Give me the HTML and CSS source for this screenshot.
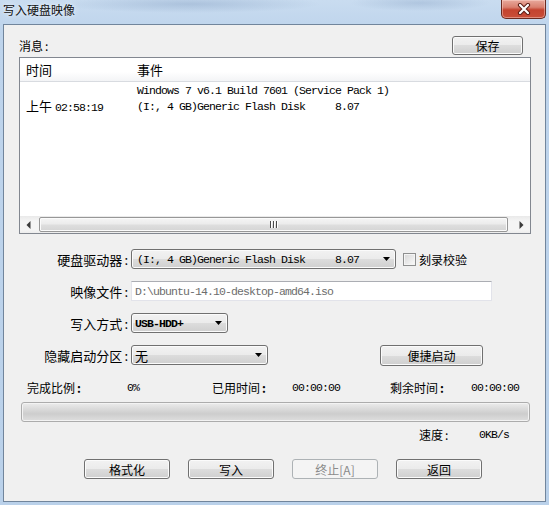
FILE: index.html
```html
<!DOCTYPE html>
<html lang="zh-CN">
<head>
<meta charset="utf-8">
<title>写入硬盘映像</title>
<link rel="stylesheet" href="styles.css">
</head>
<body>
<div class="window">
  <div class="titlebar">
    <span class="title">写入硬盘映像</span>
    <div class="close-btn">
      <svg width="14" height="12" viewBox="0 0 14 12">
        <path d="M3 2 L11 10 M11 2 L3 10" stroke="#5b1d15" stroke-width="4.2" stroke-linecap="round" fill="none"/>
        <path d="M3 2 L11 10 M11 2 L3 10" stroke="#ffffff" stroke-width="2.2" stroke-linecap="round" fill="none"/>
      </svg>
    </div>
  </div>
  <div class="client">
    <div class="msg-row">
      <span class="lbl">消息<span class="colon">:</span></span>
      <div class="btn btn-save">保存</div>
    </div>

    <div class="listview">
      <div class="lv-header">
        <div class="lv-time">时间</div>
        <div class="lv-event">事件</div>
      </div>
      <div class="lv-body">
        <div class="lv-row">
          <div class="lv-time"></div>
          <div class="lv-event mono">Windows 7 v6.1 Build 7601 (Service Pack 1)</div>
        </div>
        <div class="lv-row">
          <div class="lv-time">上午 <span class="mono">02:58:19</span></div>
          <div class="lv-event mono">(I:, 4 GB)Generic Flash Disk     8.07</div>
        </div>
      </div>
      <div class="hscroll">
        <div class="sb-arrow">
          <svg width="5" height="8" viewBox="0 0 5 8"><polygon points="4.5,0 0.5,4 4.5,8" fill="#3c3c3c"/></svg>
        </div>
        <div class="sb-track">
          <div class="sb-thumb">
            <svg width="8" height="7" viewBox="0 0 8 7">
              <rect x="0" y="0" width="1" height="7" fill="#4a4a4a"/>
              <rect x="1" y="0" width="1" height="7" fill="#ffffff"/>
              <rect x="3" y="0" width="1" height="7" fill="#4a4a4a"/>
              <rect x="4" y="0" width="1" height="7" fill="#ffffff"/>
              <rect x="6" y="0" width="1" height="7" fill="#4a4a4a"/>
              <rect x="7" y="0" width="1" height="7" fill="#ffffff"/>
            </svg>
          </div>
        </div>
        <div class="sb-arrow">
          <svg width="5" height="8" viewBox="0 0 5 8"><polygon points="0.5,0 4.5,4 0.5,8" fill="#3c3c3c"/></svg>
        </div>
      </div>
    </div>

    <div class="form">
      <div class="form-row">
        <span class="form-label">硬盘驱动器<span class="colon">:</span></span>
        <div class="combo combo-drive">
          <span class="mono">(I:, 4 GB)Generic Flash Disk     8.07</span>
          <svg class="arrow" width="7" height="4" viewBox="0 0 7 4"><polygon points="0,0 7,0 3.5,4" fill="#000"/></svg>
        </div>
        <span class="checkbox"></span>
        <span class="chk-label">刻录校验</span>
      </div>
      <div class="form-row">
        <span class="form-label">映像文件<span class="colon">:</span></span>
        <div class="textbox"><span class="mono">D:\ubuntu-14.10-desktop-amd64.iso</span></div>
      </div>
      <div class="form-row">
        <span class="form-label">写入方式<span class="colon">:</span></span>
        <div class="combo combo-mode">
          <span class="mono mono-bold">USB-HDD+</span>
          <svg class="arrow" width="7" height="4" viewBox="0 0 7 4"><polygon points="0,0 7,0 3.5,4" fill="#000"/></svg>
        </div>
      </div>
      <div class="form-row">
        <span class="form-label">隐藏启动分区<span class="colon">:</span></span>
        <div class="combo combo-hide">
          <span class="cjk-val">无</span>
          <svg class="arrow" width="7" height="4" viewBox="0 0 7 4"><polygon points="0,0 7,0 3.5,4" fill="#000"/></svg>
        </div>
        <div class="btn btn-quick">便捷启动</div>
      </div>
    </div>

    <div class="stats">
      <span>完成比例<span class="colon bold">:</span></span>
      <span class="mono">0%</span>
      <span>已用时间<span class="colon bold">:</span></span>
      <span class="mono">00:00:00</span>
      <span>剩余时间<span class="colon bold">:</span></span>
      <span class="mono">00:00:00</span>
    </div>

    <div class="progress"></div>

    <div class="speed">
      <span class="speed-lbl">速度<span class="colon">:</span></span>
      <span class="mono">0KB/s</span>
    </div>

    <div class="actions">
      <div class="btn btn-act">格式化</div>
      <div class="btn btn-act">写入</div>
      <div class="btn btn-act disabled">终止[A]</div>
      <div class="btn btn-act">返回</div>
    </div>
  </div>
</div>
</body>
</html>
```

FILE: styles.css
```css
* { box-sizing: border-box; }
html, body { margin: 0; padding: 0; }
body {
  width: 549px;
  height: 505px;
  overflow: hidden;
  font-family: "Noto Sans CJK SC", "Noto Sans", sans-serif;
  font-size: 12px;
  color: #000;
  background: #bcd3eb;
}

.mono {
  font-family: "Liberation Mono", "DejaVu Sans Mono", monospace;
  font-size: 11.5px;
  letter-spacing: -0.9px;
  white-space: pre;
}
.mono-bold { font-weight: bold; }
.colon { margin-left: 2px; }
.colon.bold { font-weight: bold; }

.window {
  width: 549px;
  height: 505px;
  display: flex;
  flex-direction: column;
  padding: 0 3px 3px 3px;
  background:
    radial-gradient(ellipse 130px 9px at 190px 4px, rgba(120,148,185,0.35), rgba(120,148,185,0) 100%),
    radial-gradient(ellipse 70px 8px at 420px 3px, rgba(120,148,185,0.3), rgba(120,148,185,0) 100%),
    linear-gradient(180deg, #c9dcf0 0%, #bed4ec 30px, #bad1ea 100%);
}

.titlebar {
  height: 24px;
  flex: none;
  display: flex;
  justify-content: space-between;
  align-items: flex-start;
}
.title {
  font-size: 12px;
  line-height: 20px;
  color: #111;
  text-shadow: 0 0 6px #e8f1fb, 0 0 3px #e8f1fb;
}
.close-btn {
  width: 45px;
  height: 19px;
  border: 1px solid #6b2a20;
  border-top: none;
  border-radius: 0 0 5px 5px;
  background: linear-gradient(180deg, #e8a99c 0%, #d9806f 40%, #c4432f 55%, #c94f39 100%);
  box-shadow: inset 0 0 0 1px rgba(255,220,210,0.45);
  display: flex;
  justify-content: center;
  align-items: center;
}

.client {
  flex: 1;
  background: #f0f0f0;
  border: 1px solid #71859c;
  display: flex;
  flex-direction: column;
}

.msg-row {
  margin-top: 11px;
  height: 19px;
  padding: 0 22px 0 15px;
  display: flex;
  justify-content: space-between;
  align-items: center;
}
.lbl { font-size: 12px; }

.btn {
  border: 1px solid #707070;
  border-radius: 3px;
  background: linear-gradient(180deg, #f2f2f2 0%, #ebebeb 50%, #dddddd 50%, #cfcfcf 100%);
  box-shadow: inset 0 0 0 1px #fbfbfb;
  display: flex;
  justify-content: center;
  align-items: center;
  font-size: 12px;
  color: #000;
}
.btn.disabled {
  border-color: #adb2b5;
  background: #f4f4f4;
  box-shadow: none;
  color: #8b8b8b;
}
.btn-save { width: 71px; height: 19px; }

.listview {
  margin: 2px 14px 0 15px;
  height: 177px;
  border: 1px solid #828790;
  background: #fff;
  display: flex;
  flex-direction: column;
}
.lv-header {
  height: 24px;
  flex: none;
  display: flex;
  align-items: center;
  background: linear-gradient(180deg, #ffffff 0%, #ffffff 60%, #f3f4f6 100%);
  border-bottom: 1px solid #d8dbe0;
  font-size: 13px;
}
.lv-time { width: 117px; padding-left: 6px; flex: none; }
.lv-event { flex: 1; }
.lv-body {
  flex: 1;
  padding-top: 1px;
}
.lv-row {
  height: 16px;
  line-height: 16px;
  display: flex;
  align-items: center;
}
.lv-row .lv-time { font-size: 13px; }

.hscroll {
  height: 17px;
  flex: none;
  display: flex;
  background: linear-gradient(180deg, #e9e9e9 0%, #f5f5f5 30%, #f5f5f5 80%, #ececec 100%);
}
.sb-arrow {
  width: 17px;
  display: flex;
  justify-content: center;
  align-items: center;
}
.sb-track { flex: 1; display: flex; align-items: center; }
.sb-thumb {
  width: 469px;
  height: 15px;
  margin-left: 2px;
  border: 1px solid #979797;
  border-radius: 2px;
  background: linear-gradient(180deg, #f5f5f5 0%, #ececec 45%, #dedede 55%, #d4d4d4 100%);
  box-shadow: inset 0 0 0 1px #fbfbfb;
  display: flex;
  justify-content: center;
  align-items: center;
}

.form {
  margin-top: 15px;
  display: flex;
  flex-direction: column;
  gap: 12px;
}
.form-row {
  height: 20px;
  display: flex;
  align-items: center;
}
.form-label {
  width: 124px;
  margin-right: 3px;
  text-align: right;
  font-size: 13px;
  flex: none;
}
.combo {
  height: 20px;
  border: 1px solid #707070;
  border-radius: 3px;
  background: linear-gradient(180deg, #f2f2f2 0%, #ebebeb 50%, #dddddd 50%, #cfcfcf 100%);
  box-shadow: inset 0 0 0 1px #fbfbfb;
  display: flex;
  align-items: center;
  justify-content: space-between;
  padding: 0 5px 0 5px;
}
.combo .arrow { flex: none; }
.combo-drive { width: 265px; padding-left: 5px; }
.combo-mode { width: 97px; padding-left: 3px; }
.combo-hide { width: 137px; padding-left: 3px; }
.cjk-val { font-size: 13px; }

.checkbox {
  width: 13px;
  height: 13px;
  margin-left: 7px;
  border: 1px solid #8e8f8f;
  background: linear-gradient(135deg, #d6d6d6 0%, #ececec 60%, #fafafa 100%);
  box-shadow: inset 0 0 0 1px #f4f4f4;
}
.chk-label { margin-left: 3px; font-size: 12px; }

.textbox {
  width: 361px;
  height: 20px;
  border: 1px solid #e2e3ea;
  border-top-color: #abadb3;
  background: #fff;
  display: flex;
  align-items: center;
  padding-left: 3px;
  color: #6d6d6d;
}

.btn-quick { width: 103px; height: 21px; margin-left: 112px; }

.stats {
  margin-top: 14px;
  height: 16px;
  padding-left: 23px;
  display: grid;
  grid-template-columns: 100px 85px 80px 98px 81px auto;
  align-items: center;
  font-size: 12px;
}

.progress {
  margin: 7px 0 0 17px;
  width: 509px;
  height: 20px;
  border: 1px solid #acacac;
  border-radius: 3px;
  background: linear-gradient(180deg, #ececec 0%, #dcdcdc 30%, #cdcdcd 60%, #dedede 100%);
  box-shadow: inset 0 0 0 1px #f3f3f3;
}

.speed {
  margin-top: 4px;
  height: 16px;
  padding-left: 415px;
  display: flex;
  align-items: center;
}
.speed-lbl { width: 60px; }

.actions {
  margin-top: 17px;
  padding-left: 80px;
  display: flex;
  gap: 18px;
}
.btn-act { width: 86px; height: 20px; }
```
